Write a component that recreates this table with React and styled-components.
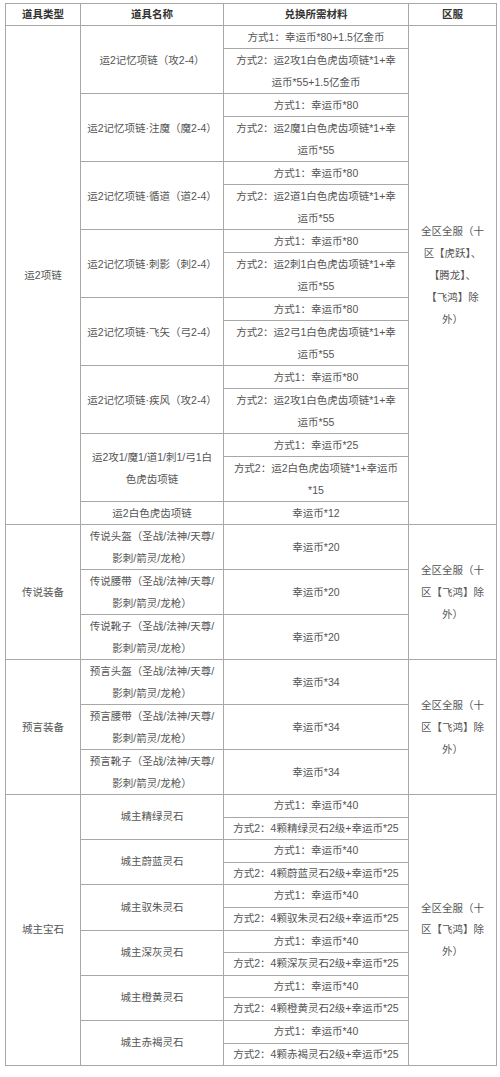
import React from 'react'
import styled, { createGlobalStyle } from 'styled-components'

const GlobalStyle = createGlobalStyle`
    html, body {
        margin: 0;
        padding: 0;
        background: #ffffff;
    }
    body {
        font-family: 'Liberation Sans', 'Noto Sans CJK SC', 'Microsoft YaHei', sans-serif;
    }
`

const REGION_ALL = ['全区全服（十', '区【虎跃】、', '【腾龙】、', '【飞鸿】除', '外）']
const REGION_FH = ['全区全服（十', '区【飞鸿】除', '外）']

const necklace = (name, cls) => ({
    name: [name],
    ways: [['方式1：幸运币*80'], [`方式2：运2${cls}1白色虎齿项链*1+幸`, '运币*55']],
})

const equip = (prefix, cost) =>
    ['头盔', '腰带', '靴子'].map((part) => ({
        name: [`${prefix}${part}（圣战/法神/天尊/`, '影刺/箭灵/龙枪）'],
        ways: [[`幸运币*${cost}`]],
    }))

const stone = (color) => ({
    name: [`城主${color}灵石`],
    ways: [['方式1：幸运币*40'], [`方式2：4颗${color}灵石2级+幸运币*25`]],
})

const groups = [
    {
        type: '运2项链',
        region: REGION_ALL,
        items: [
            {
                name: ['运2记忆项链（攻2-4）'],
                ways: [['方式1：幸运币*80+1.5亿金币'], ['方式2：运2攻1白色虎齿项链*1+幸', '运币*55+1.5亿金币']],
            },
            necklace('运2记忆项链·注魔（魔2-4）', '魔'),
            necklace('运2记忆项链·循道（道2-4）', '道'),
            necklace('运2记忆项链·刺影（刺2-4）', '刺'),
            necklace('运2记忆项链·飞矢（弓2-4）', '弓'),
            necklace('运2记忆项链·疾风（攻2-4）', '攻'),
            {
                name: ['运2攻1/魔1/道1/刺1/弓1白', '色虎齿项链'],
                ways: [['方式1：幸运币*25'], ['方式2：运2白色虎齿项链*1+幸运币', '*15']],
            },
            { name: ['运2白色虎齿项链'], ways: [['幸运币*12']] },
        ],
    },
    { type: '传说装备', region: REGION_FH, items: equip('传说', 20) },
    { type: '预言装备', region: REGION_FH, items: equip('预言', 34) },
    {
        type: '城主宝石',
        region: REGION_FH,
        compact: true,
        items: ['精绿', '蔚蓝', '驭朱', '深灰', '橙黄', '赤褐'].map(stone),
    },
]

const Lines = ({ lines }) =>
    lines.map((line, i) => (
        <React.Fragment key={i}>
            {i > 0 && <br />}
            {line}
        </React.Fragment>
    ))

const App = () => {
    const rows = []
    groups.forEach((group, g) => {
        const span = group.items.reduce((n, item) => n + item.ways.length, 0)
        const $compact = !!group.compact
        group.items.forEach((item, k) => {
            item.ways.forEach((way, j) => {
                const first = k === 0 && j === 0
                rows.push(
                    <tr key={`${g}-${k}-${j}`}>
                        {first && (
                            <Cell rowSpan={span} $compact={$compact}>
                                {group.type}
                            </Cell>
                        )}
                        {j === 0 && (
                            <Cell rowSpan={item.ways.length} $compact={$compact}>
                                <Lines lines={item.name} />
                            </Cell>
                        )}
                        <Cell $compact={$compact}>
                            <Lines lines={way} />
                        </Cell>
                        {first && (
                            <Cell rowSpan={span} $compact={$compact}>
                                <Lines lines={group.region} />
                            </Cell>
                        )}
                    </tr>
                )
            })
        })
    })

    return (
        <>
            <GlobalStyle />
            <Page>
                <Table>
                    <colgroup>
                        <col style={{ width: 75 }} />
                        <col style={{ width: 143 }} />
                        <col style={{ width: 185 }} />
                        <col style={{ width: 88 }} />
                    </colgroup>
                    <thead>
                        <tr>
                            <Th>道具类型</Th>
                            <Th>道具名称</Th>
                            <Th>兑换所需材料</Th>
                            <Th>区服</Th>
                        </tr>
                    </thead>
                    <tbody>{rows}</tbody>
                </Table>
            </Page>
        </>
    )
}

const Page = styled.div`
    padding: 3px 4px 10px 5px;
`

const Table = styled.table`
    width: 491px;
    table-layout: fixed;
    border-collapse: collapse;
    border: 1px solid #9e9e9e;
    font-size: 10.5px;
    color: #555555;
`

const Th = styled.th`
    border: 1px solid #a8a8a8;
    height: 21px;
    line-height: 21px;
    padding: 0;
    font-weight: bold;
    color: #333333;
    text-align: center;
`

const Cell = styled.td`
    border: 1px solid #a8a8a8;
    padding: 0 3px;
    line-height: ${(props) => (props.$compact ? '21.6px' : '22px')};
    text-align: center;
    vertical-align: middle;
    white-space: nowrap;
`

export default App
